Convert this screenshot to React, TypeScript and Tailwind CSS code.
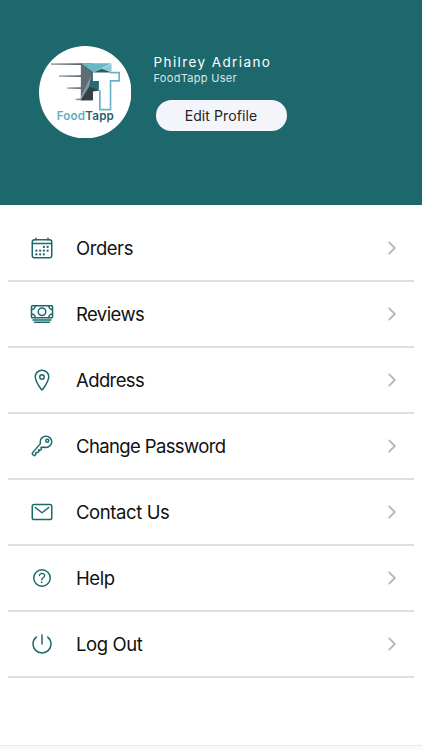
import type { IconType } from "react-icons";
import {
  IoCalendarOutline,
  IoCashOutline,
  IoChevronForward,
  IoHelpCircleOutline,
  IoKeyOutline,
  IoLocationOutline,
  IoMailOutline,
  IoPowerOutline,
} from "react-icons/io5";

type MenuItem = {
  label: string;
  icon: IconType;
  tracking: string;
};

const menuItems: MenuItem[] = [
  { label: "Orders", icon: IoCalendarOutline, tracking: "tracking-[-0.45px]" },
  { label: "Reviews", icon: IoCashOutline, tracking: "tracking-[-0.6px]" },
  { label: "Address", icon: IoLocationOutline, tracking: "tracking-[-0.6px]" },
  { label: "Change Password", icon: IoKeyOutline, tracking: "tracking-[-0.62px]" },
  { label: "Contact Us", icon: IoMailOutline, tracking: "tracking-[-0.4px]" },
  { label: "Help", icon: IoHelpCircleOutline, tracking: "tracking-[-0.4px]" },
  { label: "Log Out", icon: IoPowerOutline, tracking: "tracking-[-0.4px]" },
];

function Logo() {
  return (
    <svg viewBox="26 27 278 278" className="h-[92.5px] w-[92.5px] shrink-0">
      <defs>
        <linearGradient id="speed" x1="0" x2="1">
          <stop offset="0" stopColor="#a9b0b5" />
          <stop offset="1" stopColor="#4f5b62" />
        </linearGradient>
        <linearGradient id="side" x1="0" y1="0" x2="0" y2="1">
          <stop offset="0" stopColor="#56666f" />
          <stop offset="1" stopColor="#28343c" />
        </linearGradient>
      </defs>
      <circle cx="165" cy="166" r="139" fill="#fff" />
      {/* speed lines */}
      <path d="M62 79H156V84H62z" fill="url(#speed)" />
      <path d="M86 115H156V120H86z" fill="url(#speed)" />
      <path d="M111 151H156V156H111z" fill="url(#speed)" />
      <path d="M136 185H160V190H136z" fill="url(#speed)" />
      {/* folded F */}
      <path d="M152 79H188V190H152z" fill="url(#side)" />
      <path d="M152 79H244L190 107z" fill="#69b9c3" />
      <path d="M244 80V104L212 96z" fill="#8ccbd2" />
      <path d="M186 108L214 95L242 105V112H186z" fill="#285e68" />
      <path d="M152 79L186 108L152 178z" fill="#5d6e76" />
      <path d="M186 108L177 148L152 190V178z" fill="#87959b" />
      <path d="M184 108H190V132H206V158H178z" fill="#296a74" />
      <path d="M178 150L212 160L188 164V190H155z" fill="#344049" />
      {/* outlined T, open where it meets the F */}
      <path d="M188 107H267V132H241V218H209V132H188z" fill="#fff" />
      <path
        d="M240 107H267V132H241V218H209V160"
        fill="none"
        stroke="#67b5c0"
        strokeWidth="5"
      />
      <text
        x="79"
        y="249"
        textLength="172"
        className="font-['Inter',sans-serif] text-[35px] font-semibold"
        fill="#63b0bb"
      >
        Food<tspan fill="#285f6b">Tapp</tspan>
      </text>
    </svg>
  );
}

function MenuRow({ label, icon: Icon, tracking }: MenuItem) {
  return (
    <li>
      <div className="flex h-[63.9px] items-center pr-3 pl-[22px]">
        <Icon size={24} className="shrink-0 text-[#1d686d]" />
        <span className={`ml-[22px] flex-1 text-[18.5px] leading-6 text-[#111] ${tracking}`}>
          {label}
        </span>
        <IoChevronForward size={20} className="shrink-0 text-[#b8b8b8]" />
      </div>
      <div className="h-[2px] bg-[#e0e0e0]" />
    </li>
  );
}

export default function App() {
  return (
    <div className="flex h-[750px] w-full flex-col overflow-hidden bg-white font-['Inter',sans-serif]">
      <header className="flex h-[205px] shrink-0 items-start bg-[#1d686d] pt-[45.5px] pl-[38.5px]">
        <Logo />
        <div className="ml-[22.5px] flex flex-col items-start pt-[7px] text-white">
          <h1 className="text-[13.5px] leading-[18px] tracking-[1.4px]">
            Philrey Adriano
          </h1>
          <p className="text-[11px] leading-[14px] tracking-[0.3px] text-[#d6e8e9]">
            FoodTapp User
          </p>
          <button className="mt-[15.5px] ml-[2px] h-[30.5px] w-[131px] rounded-full bg-[#f4f5fa] text-[14px] tracking-[0.1px] text-[#222]">
            Edit Profile
          </button>
        </div>
      </header>

      <ul className="mx-2 pt-[11.3px]">
        {menuItems.map((item) => (
          <MenuRow key={item.label} {...item} />
        ))}
      </ul>

      <div className="mt-auto h-[5px] border-t border-[#e9e9e9] bg-[#fafafa]" />
    </div>
  );
}
